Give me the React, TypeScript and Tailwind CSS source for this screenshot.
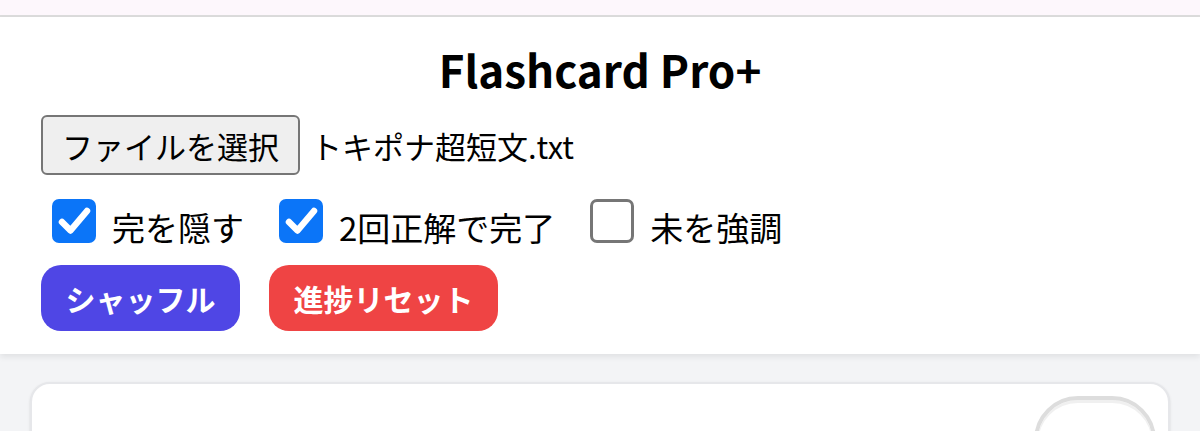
import React, { useState } from 'react';

const font = { fontFamily: '"Noto Sans CJK JP", "Noto Sans", sans-serif' };

function Check({ checked, label, onToggle }: { checked: boolean; label: string; onToggle: () => void }) {
  return (
    <label className="flex items-center cursor-pointer" onClick={onToggle}>
      {checked ? (
        <span className="flex items-center justify-center w-[44px] h-[44px] rounded-[7px] bg-[#0b75f8]">
          <svg width="44" height="44" viewBox="0 0 44 44" fill="none">
            <path d="M10 23l8.5 8.5L35 12" stroke="white" strokeWidth="6.5" strokeLinecap="round" strokeLinejoin="round" />
          </svg>
        </span>
      ) : (
        <span className="w-[44px] h-[44px] rounded-[7px] border-[3px] border-[#767676] bg-white" />
      )}
      <span className="ml-[16px] mt-[14px] text-[33px] leading-none text-black">{label}</span>
    </label>
  );
}

export default function App() {
  const [hideDone, setHideDone] = useState(true);
  const [twice, setTwice] = useState(true);
  const [highlight, setHighlight] = useState(false);

  return (
    <div className="min-h-screen bg-[#f3f4f6]" style={font}>
      <div className="h-[17px] bg-[#fdf7fc] border-b-2 border-[#dcdcdc]" />

      {/* Header controls */}
      <header className="bg-white px-[41px] pt-[30px] pb-[23px] shadow-[0_3px_6px_rgba(0,0,0,0.08)]">
        <h1 className="text-center text-[44px] font-bold leading-none text-black">Flashcard Pro+</h1>

        <div className="flex items-center mt-[24px]">
          <button
            type="button"
            className="h-[60px] w-[259px] rounded-[6px] border-2 border-[#767676] bg-[#efefef] text-[31px] leading-none text-black"
          >
            ファイルを選択
          </button>
          <span className="ml-[11px] text-[31px] leading-none text-black">トキポナ超短文.txt</span>
        </div>

        <div className="flex items-center mt-[22px] ml-[11px] gap-[35px]">
          <Check checked={hideDone} label="完を隠す" onToggle={() => setHideDone((v) => !v)} />
          <Check checked={twice} label="2回正解で完了" onToggle={() => setTwice((v) => !v)} />
          <Check checked={highlight} label="未を強調" onToggle={() => setHighlight((v) => !v)} />
        </div>

        <div className="flex items-center mt-[21px] gap-[29px]">
          <button
            type="button"
            className="h-[66px] w-[199px] rounded-[20px] bg-[#4f46e5] text-[30px] font-bold leading-none text-white"
          >
            シャッフル
          </button>
          <button
            type="button"
            className="h-[66px] w-[229px] rounded-[20px] bg-[#ef4444] text-[30px] font-bold leading-none text-white"
          >
            進捗リセット
          </button>
        </div>
      </header>

      {/* Card */}
      <main className="px-[30px] pt-[28px]">
        <div className="h-[220px] rounded-[20px] border-2 border-[#e6e7ea] bg-white shadow-sm pt-[12px] pr-[12px] flex justify-end">
          <div className="w-[122px] h-[122px] rounded-[44px] border-[4px] border-[#dddddd] bg-white shadow-[inset_0_3px_0_rgba(0,0,0,0.06)]" />
        </div>
      </main>
    </div>
  );
}
